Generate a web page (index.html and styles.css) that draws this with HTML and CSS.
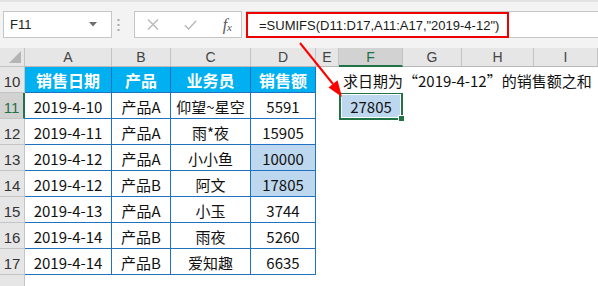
FILE: index.html
```html
<!DOCTYPE html>
<html lang="zh-CN">
<head>
<meta charset="utf-8">
<title>SUMIFS</title>
<link rel="stylesheet" href="styles.css">
</head>
<body>
<div class="app">
  <div class="toolbar">
    <div class="namebox">
      <span class="name">F11</span>
      <svg class="dd" width="8" height="5" viewBox="0 0 8 5"><path d="M0 0H8L4 4.5Z" fill="#6f6f6f"/></svg>
    </div>
    <div class="grip">
      <svg width="3" height="12" viewBox="0 0 3 12"><rect x="0.5" y="0" width="2" height="2" fill="#a8a8a8"/><rect x="0.5" y="5" width="2" height="2" fill="#a8a8a8"/><rect x="0.5" y="10" width="2" height="2" fill="#a8a8a8"/></svg>
    </div>
    <div class="fbtns">
      <svg width="12" height="11" viewBox="0 0 12 11"><path d="M1 0.5L11 10.5M11 0.5L1 10.5" stroke="#b8b8b8" stroke-width="1.4" fill="none"/></svg>
      <svg width="13" height="10" viewBox="0 0 13 10"><path d="M0.8 5.2L4.6 9L12.2 0.8" stroke="#b8b8b8" stroke-width="1.4" fill="none"/></svg>
      <span class="fx">f<sub>x</sub></span>
    </div>
    <div class="fbar">
      <span class="formula">=SUMIFS(D11:D17,A11:A17,"2019-4-12")</span>
    </div>
  </div>

  <div class="sheet">
    <div class="corner"><svg width="12" height="12" viewBox="0 0 12 12"><path d="M12 0V12H0Z" fill="#b4b4b4"/></svg></div>
    <div class="ch">A</div><div class="ch">B</div><div class="ch">C</div><div class="ch">D</div><div class="ch">E</div><div class="ch sel-col">F</div><div class="ch">G</div><div class="ch">H</div><div class="ch">I</div>

    <div class="rh">10</div>
    <div class="c h">销售日期</div><div class="c h">产品</div><div class="c h">业务员</div><div class="c h">销售额</div>
    <div class="e"></div><div class="e note">求日期为“2019-4-12”的销售额之和</div><div class="e"></div><div class="e"></div><div class="e"></div>

    <div class="rh sel-row">11</div>
    <div class="c">2019-4-10</div><div class="c">产品A</div><div class="c">仰望~星空</div><div class="c">5591</div>
    <div class="e"></div><div class="e active"><span>27805</span><div class="sel"><div class="handle"></div></div></div><div class="e"></div><div class="e"></div><div class="e"></div>

    <div class="rh">12</div>
    <div class="c">2019-4-11</div><div class="c">产品A</div><div class="c">雨*夜</div><div class="c">15905</div>
    <div class="e"></div><div class="e"></div><div class="e"></div><div class="e"></div><div class="e"></div>

    <div class="rh">13</div>
    <div class="c">2019-4-12</div><div class="c">产品A</div><div class="c">小小鱼</div><div class="c hl">10000</div>
    <div class="e"></div><div class="e"></div><div class="e"></div><div class="e"></div><div class="e"></div>

    <div class="rh">14</div>
    <div class="c">2019-4-12</div><div class="c">产品B</div><div class="c">阿文</div><div class="c hl">17805</div>
    <div class="e"></div><div class="e"></div><div class="e"></div><div class="e"></div><div class="e"></div>

    <div class="rh">15</div>
    <div class="c">2019-4-13</div><div class="c">产品A</div><div class="c">小玉</div><div class="c">3744</div>
    <div class="e"></div><div class="e"></div><div class="e"></div><div class="e"></div><div class="e"></div>

    <div class="rh">16</div>
    <div class="c">2019-4-14</div><div class="c">产品B</div><div class="c">雨夜</div><div class="c">5260</div>
    <div class="e"></div><div class="e"></div><div class="e"></div><div class="e"></div><div class="e"></div>

    <div class="rh">17</div>
    <div class="c">2019-4-14</div><div class="c">产品B</div><div class="c">爱知趣</div><div class="c">6635</div>
    <div class="e"></div><div class="e"></div><div class="e"></div><div class="e"></div><div class="e"></div>

    <div class="rh"></div>
    <div class="e"></div><div class="e"></div><div class="e"></div><div class="e"></div><div class="e"></div><div class="e"></div><div class="e"></div><div class="e"></div><div class="e"></div>
  </div>

  <svg class="arrow" width="598" height="286" viewBox="0 0 598 286">
    <line x1="300" y1="43" x2="333" y2="84" stroke="#ff0000" stroke-width="2"/>
    <path d="M342 97L328.5 87.5L337.5 80.2Z" fill="#ff0000"/>
  </svg>
</div>
</body>
</html>
```

FILE: styles.css
```css
html, body {
  margin: 0;
  padding: 0;
  width: 598px;
  height: 286px;
  overflow: hidden;
  background: #ffffff;
}

.app {
  position: relative;
  width: 598px;
  height: 286px;
  overflow: hidden;
  font-family: "Noto Sans CJK SC", "Liberation Sans", sans-serif;
}

/* ---------- formula toolbar ---------- */
.toolbar {
  display: flex;
  align-items: stretch;
  height: 48px;
  box-sizing: border-box;
  padding: 11px 0 10px 3px;
  background: #f3f3f3;
  border-top: 2px solid #e2e2e2;
  padding-top: 9px;
}

.namebox {
  width: 109px;
  box-sizing: border-box;
  background: #fff;
  border: 1px solid #c6c6c6;
  display: flex;
  align-items: center;
  justify-content: space-between;
  padding: 0 14px 0 6px;
}

.name {
  font-family: "Liberation Sans", sans-serif;
  font-size: 13px;
  color: #222;
}

.grip {
  width: 22px;
  display: flex;
  align-items: center;
  padding-left: 5px;
  box-sizing: border-box;
}

.fbtns {
  width: 108px;
  box-sizing: border-box;
  background: #fff;
  border: 1px solid #c6c6c6;
  display: flex;
  align-items: center;
  justify-content: space-between;
  padding: 0 9px 0 12px;
}

.fx {
  font-family: "Liberation Serif", serif;
  font-style: italic;
  font-size: 16px;
  color: #555;
  line-height: 1;
}

.fx sub {
  font-size: 11px;
  vertical-align: -1px;
}

.fbar {
  flex: 1;
  margin-left: 4px;
  background: #fff;
  border-top: 1px solid #c6c6c6;
  border-bottom: 1px solid #c6c6c6;
  display: flex;
  align-items: center;
}

.formula {
  display: flex;
  align-items: center;
  height: 26px;
  box-sizing: border-box;
  margin-top: 1px;
  border: 2px solid #ee0000;
  padding: 0 8px 0 11px;
  font-family: "Liberation Sans", sans-serif;
  font-size: 13px;
  color: #1a1a1a;
  white-space: nowrap;
}

/* ---------- sheet grid ---------- */
.sheet {
  display: grid;
  grid-template-columns: 25px 87px 59px 80px 65px 23px 64px 59px 72px 64px;
  grid-template-rows: 19px repeat(9, 26px);
}

.sheet > div {
  box-sizing: border-box;
}

.corner {
  background: #e6e6e6;
  border-right: 1px solid #c4c4c4;
  border-bottom: 1px solid #c4c4c4;
  display: flex;
  align-items: flex-end;
  justify-content: flex-end;
  padding: 0 3px 3px 0;
}

.ch {
  background: #e6e6e6;
  border-right: 1px solid #c4c4c4;
  border-bottom: 1px solid #b8b8b8;
  display: flex;
  align-items: flex-end;
  justify-content: center;
  padding-bottom: 1px;
  font-family: "Liberation Sans", sans-serif;
  font-size: 14px;
  color: #444;
  line-height: 16px;
}

.ch.sel-col {
  background: #d2d2d2;
  color: #217346;
  border-bottom: 2px solid #217346;
  padding-bottom: 0;
}

.rh {
  background: #e6e6e6;
  border-right: 1px solid #c4c4c4;
  border-bottom: 1px solid #c4c4c4;
  display: flex;
  align-items: flex-end;
  justify-content: center;
  padding-bottom: 1px;
  font-family: "Liberation Sans", sans-serif;
  font-size: 15px;
  line-height: 18px;
  color: #333;
}

.rh.sel-row {
  background: #d2d2d2;
  color: #217346;
  border-right: 2px solid #217346;
}

.c {
  border-right: 1px solid #2171c1;
  border-bottom: 1px solid #2171c1;
  display: flex;
  align-items: center;
  justify-content: center;
  padding-top: 2px;
  font-size: 15px;
  color: #111;
  white-space: nowrap;
  background: #fff;
}

.c.h {
  background: #00b0f0;
  color: #fff;
  font-weight: 700;
  font-size: 16px;
  padding-top: 0;
}

.c.hl {
  background: #bdd7ee;
}

.e {
  background: #fff;
}

.note {
  position: relative;
  z-index: 2;
  white-space: nowrap;
  overflow: visible;
  font-size: 15px;
  color: #111;
  display: flex;
  align-items: center;
  padding: 1px 0 0 4px;
}

.active {
  position: relative;
  background: #bdd7ee;
  display: flex;
  align-items: center;
  justify-content: center;
  font-size: 15px;
  color: #111;
  padding-top: 1px;
}

.sel {
  position: absolute;
  left: 0;
  right: 0;
  top: -1px;
  bottom: -1px;
  border: 2px solid #217346;
  box-shadow: inset 0 0 0 1px #ffffff;
}

.handle {
  position: absolute;
  right: -4px;
  bottom: -4px;
  width: 5px;
  height: 5px;
  background: #217346;
  border: 1px solid #ffffff;
}

/* ---------- annotation arrow ---------- */
.arrow {
  position: absolute;
  left: 0;
  top: 0;
  pointer-events: none;
  z-index: 5;
}
```
